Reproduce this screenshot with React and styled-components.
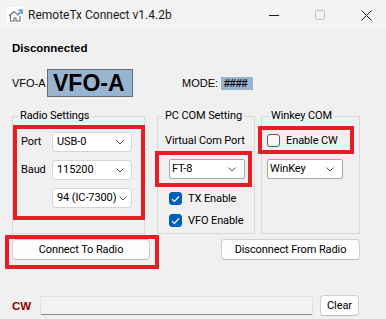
import React from 'react';
import styled, { createGlobalStyle } from 'styled-components';

const GlobalStyle = createGlobalStyle`
  html, body { margin: 0; padding: 0; background: #f0f0f0; }
  #root { width: 386px; height: 319px; }
  * { box-sizing: border-box; }
`;

const Window = styled.div`
  position: relative;
  width: 386px;
  height: 319px;
  overflow: hidden;
  background: #f0f0f0;
  font-family: "Segoe UI", Roboto, "Noto Sans", sans-serif;
  font-size: 11px;
  letter-spacing: -0.1px;
  color: #000;
`;

const TitleBar = styled.div`
  display: flex;
  align-items: center;
  height: 30px;
  padding-left: 7px;
  background: #f3f3f3;
`;

const AppIcon = styled.svg`
  width: 16px;
  height: 16px;
  flex: none;
`;

const Title = styled.div`
  margin-left: 5px;
  font-size: 12px;
  letter-spacing: 0;
  line-height: 16px;
  color: #1a1a1a;
`;

const Captions = styled.div`
  display: flex;
  height: 100%;
  margin-left: auto;
  margin-right: -3px;
`;

const CaptionButton = styled.div`
  width: 46px;
  height: 100%;
  display: flex;
  align-items: center;
  justify-content: center;
`;

const Content = styled.div`
  padding: 11px 0 0 12px;
`;

const Status = styled.div`
  font-family: "Liberation Sans", Arial, sans-serif;
  font-weight: bold;
  font-size: 11.5px;
  letter-spacing: 0;
  line-height: 14px;
`;

const VfoRow = styled.div`
  display: flex;
  align-items: center;
  height: 28px;
  margin-top: 14px;
`;

const SmallLabel = styled.div`
  font-family: "Liberation Sans", Arial, sans-serif;
  font-size: 11px;
  letter-spacing: 0;
  line-height: 14px;
  width: ${p => p.$w}px;
  margin-left: ${p => p.$ml || 0}px;
  color: #000;
`;

const VfoBox = styled.div`
  width: 86px;
  height: 28px;
  border: 1px solid #6b6b6b;
  background: #99b4d1;
  font-family: "Liberation Sans", Arial, sans-serif;
  font-weight: bold;
  font-size: 23px;
  letter-spacing: 0;
  line-height: 26px;
  padding-left: 5px;
`;

const ModeBox = styled.div`
  width: 32px;
  height: 13px;
  background: #99b4d1;
  font-family: "Liberation Sans", Arial, sans-serif;
  font-weight: bold;
  font-size: 11px;
  line-height: 13px;
  padding-left: 3px;
  letter-spacing: -0.3px;
`;

const GroupsRow = styled.div`
  display: flex;
  align-items: stretch;
  height: 125px;
  margin-top: 12px;
`;

const Group = styled.fieldset`
  margin: 0 0 0 ${p => p.$ml || 0}px;
  padding: 0;
  min-width: 0;
  width: ${p => p.$w}px;
  border: 1px solid #d9d9d9;
`;

const Legend = styled.legend`
  margin-left: ${p => p.$ml}px;
  padding: 0 2px;
  font-size: 11px;
  line-height: 14px;
  color: #000;
`;

const FieldGrid = styled.div`
  display: grid;
  grid-template-columns: 31px 80px;
  grid-auto-rows: 20px;
  row-gap: 8px;
  align-items: center;
  padding: 9px 0 0 8px;
`;

const GroupBody = styled.div`
  display: flex;
  flex-direction: column;
  align-items: flex-start;
  padding: 11px 0 0 ${p => p.$pl}px;
`;

const FieldLabel = styled.div`
  font-size: 11px;
  line-height: 14px;
  white-space: nowrap;
  grid-column: ${p => p.$col || 'auto'};
`;

const Combo = styled.div`
  position: relative;
  grid-column: ${p => p.$col || 'auto'};
  width: ${p => p.$w}px;
  height: 20px;
  margin-top: ${p => p.$mt || 0}px;
  margin-left: ${p => p.$ml || 0}px;
  background: #fff;
  border: 1px solid ${p => (p.$edit ? '#a8a8a8' : '#d4d4d4')};
  border-radius: ${p => (p.$edit ? 2 : 3)}px;
  display: flex;
  align-items: center;
  padding-left: ${p => (p.$edit ? 2 : 4)}px;
  font-size: 11px;
  line-height: 14px;
  white-space: nowrap;
`;

const Chevron = styled.svg`
  position: absolute;
  right: ${p => p.$r}px;
  top: 7px;
  width: 8px;
  height: 5px;
`;

const CheckRow = styled.div`
  display: flex;
  align-items: center;
  gap: 6px;
  height: 13px;
  margin-top: ${p => p.$mt || 0}px;
  margin-left: ${p => p.$ml || 0}px;
  font-size: 11px;
  line-height: 14px;
  white-space: nowrap;
`;

const Box = styled.div`
  width: 13px;
  height: 13px;
  border-radius: 3px;
  flex: none;
  display: flex;
  align-items: center;
  justify-content: center;
  background: ${p => (p.$on ? '#005fb8' : '#f7f7f7')};
  border: 1px solid ${p => (p.$on ? '#005fb8' : '#5c5c5c')};
`;

const ButtonRow = styled.div`
  display: flex;
  margin-top: 5px;
`;

const Button = styled.div`
  width: ${p => p.$w}px;
  height: 21px;
  margin-left: ${p => p.$ml || 0}px;
  background: #fdfdfd;
  border: 1px solid #d0d0d0;
  border-bottom-color: #bcbcbc;
  border-radius: 4px;
  display: flex;
  align-items: center;
  justify-content: center;
  font-size: 11px;
  line-height: 14px;
  color: #000;
  white-space: nowrap;
`;

const CwRow = styled.div`
  display: flex;
  align-items: center;
  margin-top: 35px;
`;

const CwLabel = styled.div`
  width: 28px;
  font-family: "Liberation Sans", Arial, sans-serif;
  font-weight: bold;
  font-size: 11.5px;
  letter-spacing: 0;
  line-height: 14px;
  color: #8b0000;
`;

const CwBar = styled.div`
  width: 273px;
  height: 19px;
  background: #f2f2f2;
  border: 1px solid #e0e0e0;
  border-bottom-color: #8a8a8a;
  border-radius: 2px;
`;

const Mark = styled.div`
  position: absolute;
  left: ${p => p.$x}px;
  top: ${p => p.$y}px;
  width: ${p => p.$w}px;
  height: ${p => p.$h}px;
  border: 4px solid #e81c24;
  pointer-events: none;
`;

const Check = () => (
  <svg width="9" height="8" viewBox="0 0 9 8">
    <path d="M1 4.2 L3.4 6.5 L8 1.5" fill="none" stroke="#fff" strokeWidth="1.2" />
  </svg>
);

const Down = ({ r }) => (
  <Chevron $r={r} viewBox="0 0 8 5">
    <path d="M0.5 0.5 L4 4 L7.5 0.5" fill="none" stroke="#5a5a5a" strokeWidth="1" />
  </Chevron>
);

export default function App() {
  return (
    <Window>
      <GlobalStyle />
      <TitleBar>
        <AppIcon viewBox="0 0 16 16">
          <rect x="0" y="0" width="16" height="16" fill="#fff" />
          <path d="M2 9 L7 4.5 L10 7.2" fill="none" stroke="#606a74" strokeWidth="1.1" />
          <path d="M3.5 8 V14 H7 V11 H9 V14 H13 V9" fill="none" stroke="#606a74" strokeWidth="1.1" />
          <path d="M10 8.5 L14 4.5" fill="none" stroke="#2f7fd0" strokeWidth="1.3" />
          <path d="M11.2 3.2 H15 V7" fill="none" stroke="#2f7fd0" strokeWidth="1.3" />
        </AppIcon>
        <Title>RemoteTx Connect v1.4.2b</Title>
        <Captions>
          <CaptionButton>
            <svg width="10" height="10" viewBox="0 0 10 10">
              <path d="M0 5.5 H10" stroke="#1a1a1a" strokeWidth="1" />
            </svg>
          </CaptionButton>
          <CaptionButton>
            <svg width="10" height="10" viewBox="0 0 10 10">
              <rect x="0.5" y="0.5" width="9" height="9" rx="1" fill="none" stroke="#c2c2c2" strokeWidth="1" />
            </svg>
          </CaptionButton>
          <CaptionButton>
            <svg width="11" height="11" viewBox="0 0 11 11">
              <path d="M0.5 0.5 L10.5 10.5 M10.5 0.5 L0.5 10.5" stroke="#1a1a1a" strokeWidth="1" />
            </svg>
          </CaptionButton>
        </Captions>
      </TitleBar>

      <Content>
        <Status>Disconnected</Status>

        <VfoRow>
          <SmallLabel $w={35}>VFO-A</SmallLabel>
          <VfoBox>VFO-A</VfoBox>
          <SmallLabel $w={39} $ml={49}>MODE:</SmallLabel>
          <ModeBox>####</ModeBox>
        </VfoRow>

        <GroupsRow>
          <Group $w={133}>
            <Legend $ml={5}>Radio Settings</Legend>
            <FieldGrid>
              <FieldLabel>Port</FieldLabel>
              <Combo $w={80}>USB-0<Down r={7} /></Combo>
              <FieldLabel>Baud</FieldLabel>
              <Combo $w={80}>115200<Down r={7} /></Combo>
              <Combo $w={80} $col="2">94 (IC-7300)<Down r={4} /></Combo>
            </FieldGrid>
          </Group>

          <Group $w={98} $ml={12}>
            <Legend $ml={5}>PC COM Setting</Legend>
            <GroupBody $pl={7}>
              <FieldLabel>Virtual Com Port</FieldLabel>
              <Combo $w={76} $mt={11} $ml={4} $edit>FT-8<Down r={8} /></Combo>
              <CheckRow $mt={13} $ml={4}>
                <Box $on><Check /></Box>
                TX Enable
              </CheckRow>
              <CheckRow $mt={9} $ml={4}>
                <Box $on><Check /></Box>
                VFO Enable
              </CheckRow>
            </GroupBody>
          </Group>

          <Group $w={99} $ml={6}>
            <Legend $ml={7}>Winkey COM</Legend>
            <GroupBody $pl={5}>
              <CheckRow>
                <Box />
                Enable CW
              </CheckRow>
              <Combo $w={76} $mt={12} $edit>WinKey<Down r={8} /></Combo>
            </GroupBody>
          </Group>
        </GroupsRow>

        <ButtonRow>
          <Button $w={138}>Connect To Radio</Button>
          <Button $w={139} $ml={71}>Disconnect From Radio</Button>
        </ButtonRow>

        <CwRow>
          <CwLabel>CW</CwLabel>
          <CwBar />
          <Button $w={39} $ml={7}>Clear</Button>
        </CwRow>
      </Content>

      <Mark $x={13} $y={125} $w={132} $h={95} />
      <Mark $x={155} $y={151} $w={97} $h={36} />
      <Mark $x={258} $y={126} $w={96} $h={28} />
      <Mark $x={5} $y={235} $w={154} $h={34} />
    </Window>
  );
}
